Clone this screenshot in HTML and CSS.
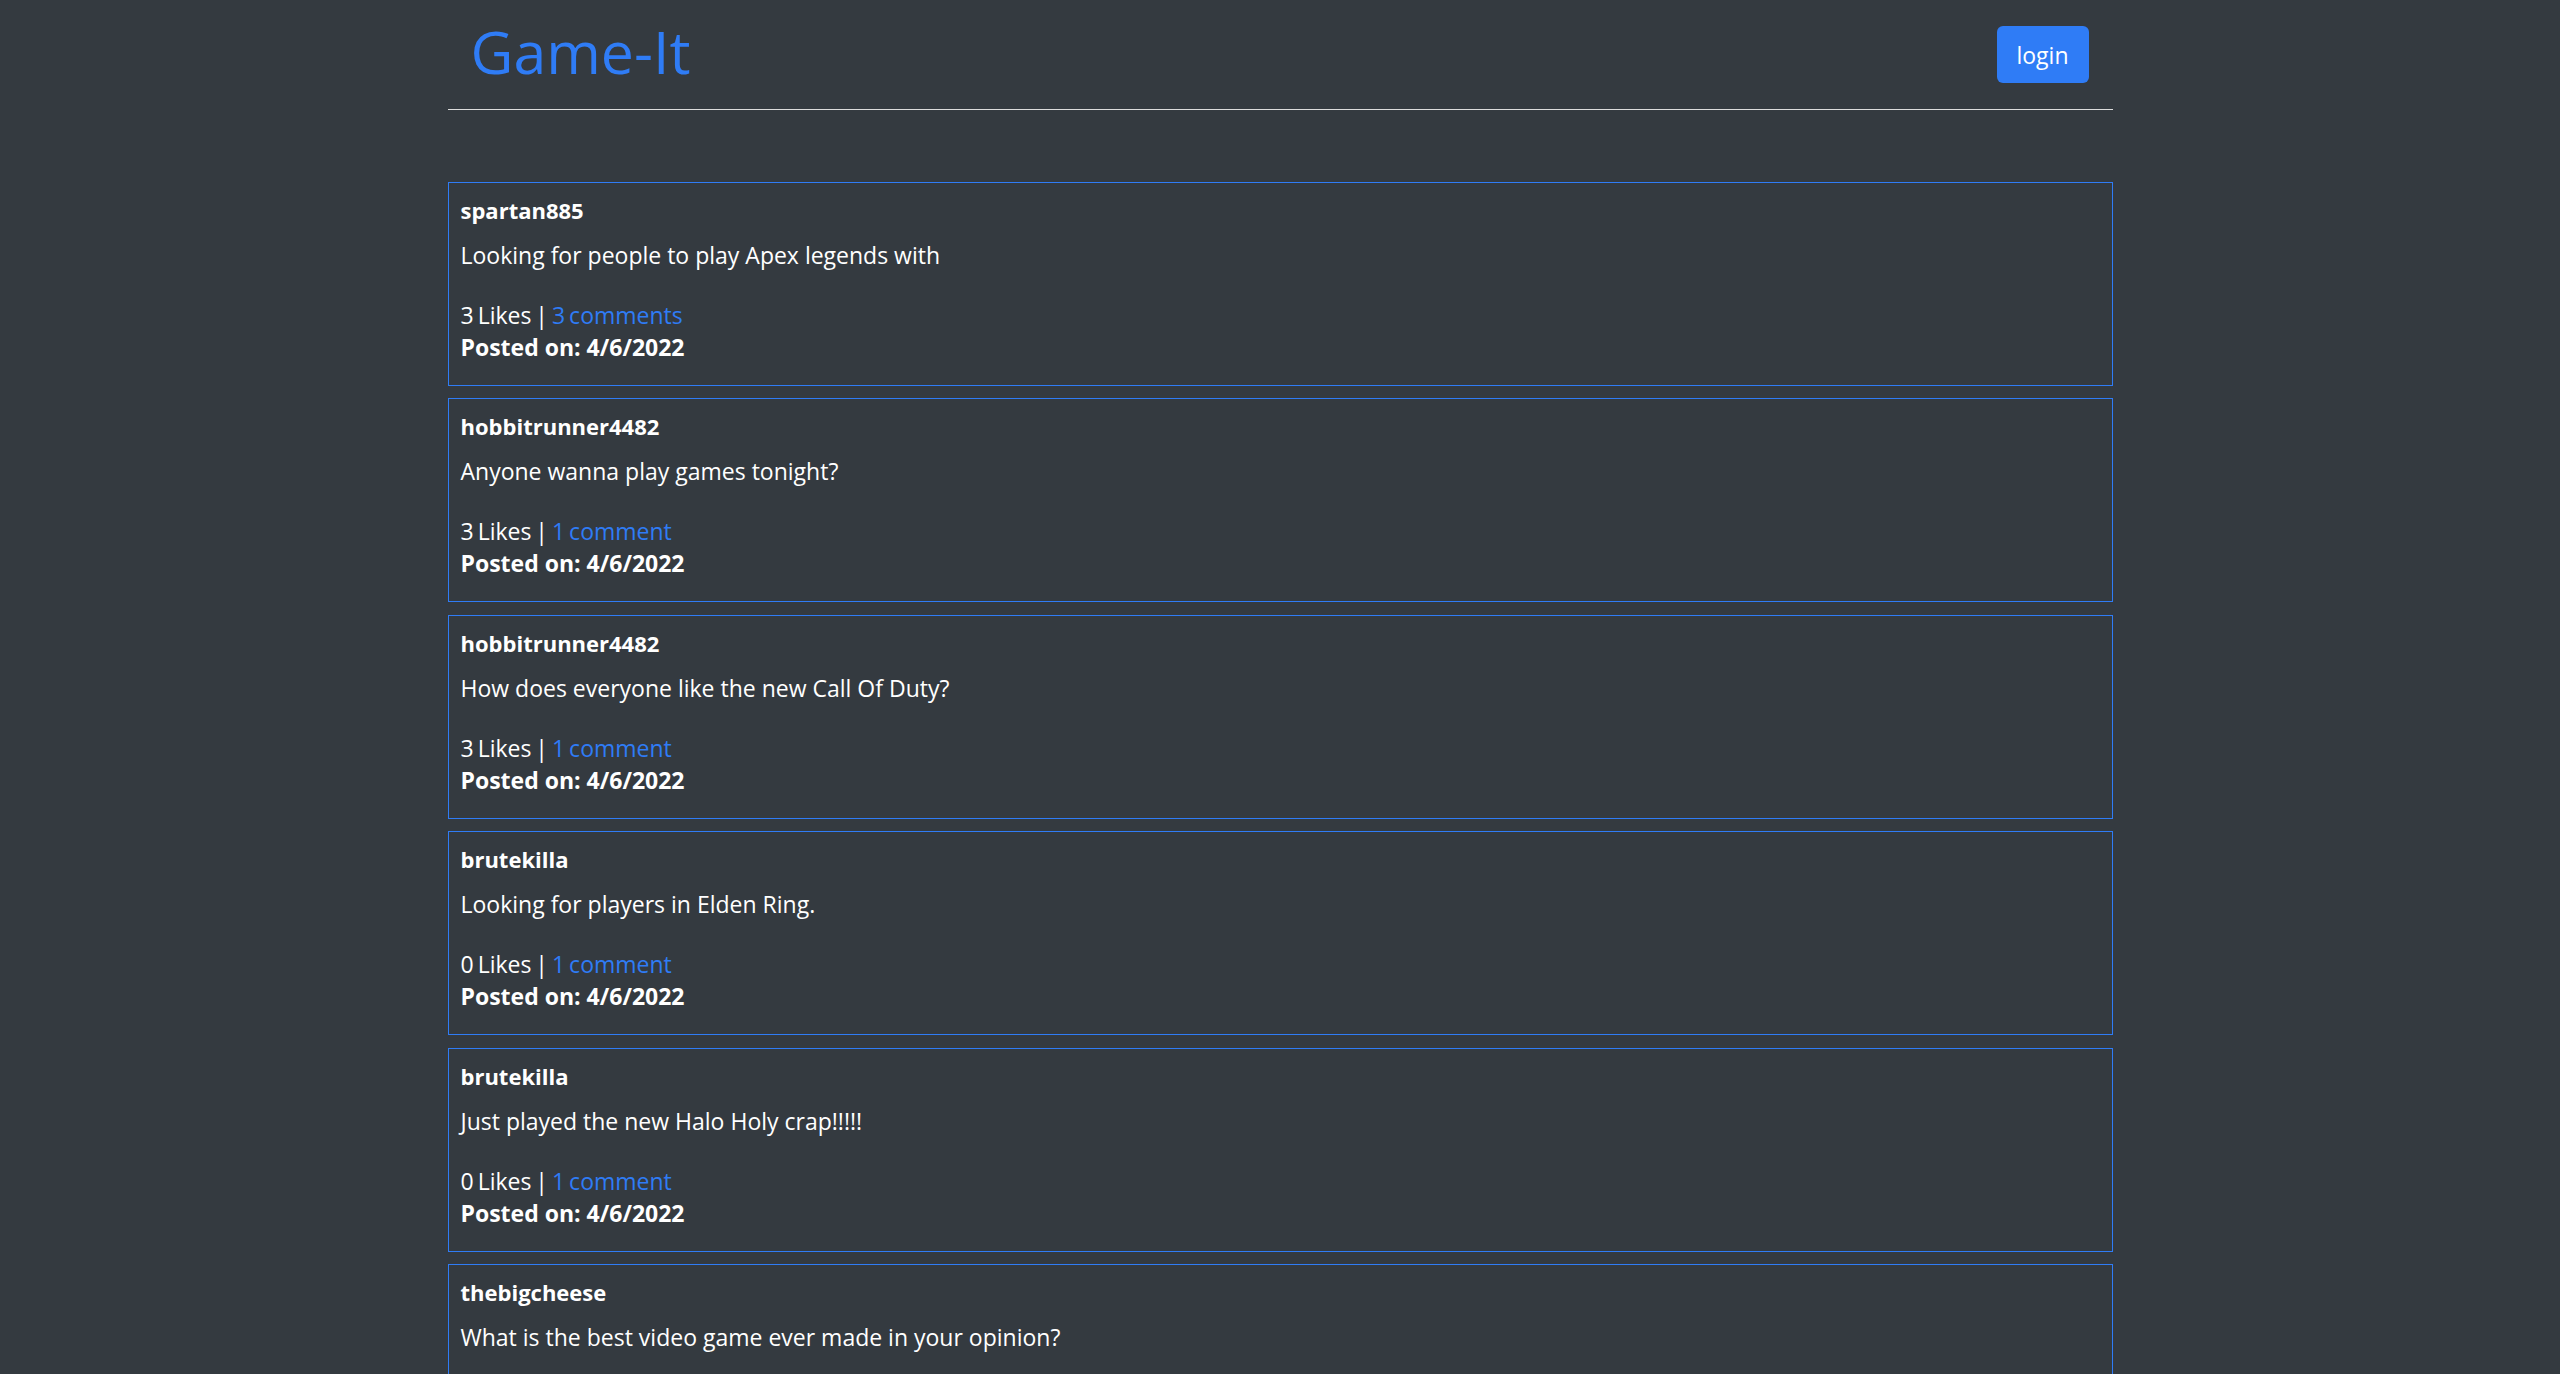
FILE: index.html
```html
<!DOCTYPE html>
<html lang="en">
<head>
<meta charset="utf-8">
<title>Game-It</title>
<link rel="stylesheet" href="styles.css">
</head>
<body>
<div class="container">
  <header class="site-header">
    <h1 class="brand">Game-It</h1>
    <button class="btn-login" type="button">login</button>
  </header>
  <main class="feed">
    <article class="post">
      <div class="post-user">spartan885</div>
      <p class="post-msg">Looking for people to play Apex legends with</p>
      <div class="post-meta">3 Likes | <a href="#" class="post-link">3 comments</a></div>
      <div class="post-date">Posted on: 4/6/2022</div>
    </article>
    <article class="post">
      <div class="post-user">hobbitrunner4482</div>
      <p class="post-msg">Anyone wanna play games tonight?</p>
      <div class="post-meta">3 Likes | <a href="#" class="post-link">1 comment</a></div>
      <div class="post-date">Posted on: 4/6/2022</div>
    </article>
    <article class="post">
      <div class="post-user">hobbitrunner4482</div>
      <p class="post-msg">How does everyone like the new Call Of Duty?</p>
      <div class="post-meta">3 Likes | <a href="#" class="post-link">1 comment</a></div>
      <div class="post-date">Posted on: 4/6/2022</div>
    </article>
    <article class="post">
      <div class="post-user">brutekilla</div>
      <p class="post-msg">Looking for players in Elden Ring.</p>
      <div class="post-meta">0 Likes | <a href="#" class="post-link">1 comment</a></div>
      <div class="post-date">Posted on: 4/6/2022</div>
    </article>
    <article class="post">
      <div class="post-user">brutekilla</div>
      <p class="post-msg">Just played the new Halo Holy crap!!!!!</p>
      <div class="post-meta">0 Likes | <a href="#" class="post-link">1 comment</a></div>
      <div class="post-date">Posted on: 4/6/2022</div>
    </article>
    <article class="post">
      <div class="post-user">thebigcheese</div>
      <p class="post-msg">What is the best video game ever made in your opinion?</p>
      <div class="post-meta">0 Likes | <a href="#" class="post-link">1 comment</a></div>
      <div class="post-date">Posted on: 4/6/2022</div>
    </article>
  </main>
</div>
</body>
</html>
```

FILE: styles.css
```css
html, body {
  margin: 0;
  padding: 0;
}
body {
  background: #343a40;
  color: #ffffff;
  font-family: "Open Sans", "Noto Sans", "Liberation Sans", sans-serif;
  font-size: 23px;
}
.container {
  width: 1665px;
  margin: 0 auto;
}
.site-header {
  height: 109px;
  display: flex;
  align-items: center;
  justify-content: space-between;
  padding: 0 24px 0 23px;
  border-bottom: 1px solid #dcdcdc;
}
.brand {
  margin: 0 0 7px;
  font-size: 59px;
  line-height: 1;
  font-weight: 500;
  color: #2f7cf6;
}
.btn-login {
  width: 92px;
  height: 57px;
  border: none;
  border-radius: 6px;
  background: #2f7cf6;
  color: #ffffff;
  font-family: inherit;
  font-size: 23px;
  padding: 0;
}
.feed {
  padding-top: 72px;
}
.post {
  height: 204px;
  box-sizing: border-box;
  border: 1px solid #2f7cf6;
  padding: 11px 12px 22px;
  margin-bottom: 12.4px;
  line-height: 32px;
}
.post-user {
  font-weight: 700;
  font-size: 22px;
  margin-bottom: 13px;
}
.post-msg {
  margin: 0 0 28px;
}
.post-meta {
  word-spacing: -2px;
}
.post-date {
  font-weight: 700;
}
.post-link {
  color: #2f7cf6;
  text-decoration: none;
}
```
